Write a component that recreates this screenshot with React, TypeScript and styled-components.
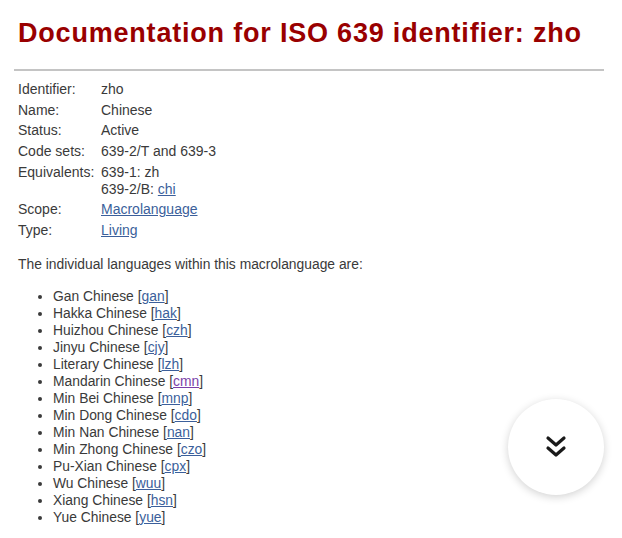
import React from "react";
import styled, { createGlobalStyle } from "styled-components";

const Global = createGlobalStyle`
  html, body { margin: 0; padding: 0; background: #fff; }
  body { font-family: "Liberation Sans", Arial, sans-serif; color: #3a3a3a; }
`;

const Page = styled.div`
  padding: 0 18px;
  position: relative;
  height: 538px;
  overflow: hidden;
`;

const Title = styled.h1`
  margin: 0;
  padding-top: 18px;
  font-size: 27px;
  letter-spacing: 0.8px;
  font-weight: bold;
  color: #990000;
  line-height: 30px;
  white-space: nowrap;
`;

const Rule = styled.hr`
  margin: 21px 0 0 -4px;
  width: 590px;
  border: none;
  border-top: 2px solid #c4c4c4;
`;

const InfoTable = styled.table`
  margin-top: 8px;
  border-collapse: separate;
  border-spacing: 0;
  font-size: 14px;
  td {
    padding: 1.85px 0;
    vertical-align: top;
    line-height: 17px;
  }
  td:first-child {
    width: 83px;
  }
`;

const Link = styled.a<{ $visited?: boolean }>`
  color: ${(p) => (p.$visited ? "#7b3fa8" : "#3b5f9b")};
  text-decoration: underline;
`;

const Intro = styled.p`
  margin: 15px 0 15px 0;
  font-size: 13.85px;
  line-height: 17px;
`;

const List = styled.ul`
  margin: 0;
  padding-left: 35px;
  font-size: 13.85px;
  line-height: 17px;
`;

const Fab = styled.button`
  position: absolute;
  left: 508px;
  top: 399px;
  width: 96px;
  height: 96px;
  border-radius: 50%;
  border: none;
  background: #fff;
  box-shadow: 0 2px 8px rgba(0, 0, 0, 0.18);
  display: flex;
  align-items: center;
  justify-content: center;
  padding: 0;
`;

const langs: [string, string, boolean?][] = [
  ["Gan Chinese", "gan"],
  ["Hakka Chinese", "hak"],
  ["Huizhou Chinese", "czh"],
  ["Jinyu Chinese", "cjy"],
  ["Literary Chinese", "lzh"],
  ["Mandarin Chinese", "cmn", true],
  ["Min Bei Chinese", "mnp"],
  ["Min Dong Chinese", "cdo"],
  ["Min Nan Chinese", "nan"],
  ["Min Zhong Chinese", "czo"],
  ["Pu-Xian Chinese", "cpx"],
  ["Wu Chinese", "wuu"],
  ["Xiang Chinese", "hsn"],
  ["Yue Chinese", "yue"],
];

export default function App() {
  return (
    <>
      <Global />
      <Page>
        <Title>Documentation for ISO 639 identifier: zho</Title>
        <Rule />
        <InfoTable>
          <tbody>
            <tr><td>Identifier:</td><td>zho</td></tr>
            <tr><td>Name:</td><td>Chinese</td></tr>
            <tr><td>Status:</td><td>Active</td></tr>
            <tr><td>Code sets:</td><td>639-2/T and 639-3</td></tr>
            <tr>
              <td>Equivalents:</td>
              <td>639-1: zh<br />639-2/B: <Link href="#">chi</Link></td>
            </tr>
            <tr><td>Scope:</td><td><Link href="#">Macrolanguage</Link></td></tr>
            <tr><td>Type:</td><td><Link href="#">Living</Link></td></tr>
          </tbody>
        </InfoTable>
        <Intro>The individual languages within this macrolanguage are:</Intro>
        <List>
          {langs.map(([name, code, v]) => (
            <li key={code}>
              {name} [<Link href="#" $visited={v}>{code}</Link>]
            </li>
          ))}
        </List>
        <Fab aria-label="scroll down">
          <svg width="22" height="24" viewBox="0 0 22 24" fill="none" stroke="#1a1a1a" strokeWidth="3.2" strokeLinecap="round" strokeLinejoin="round">
            <polyline points="3,3 11,10 19,3" />
            <polyline points="3,13 11,20 19,13" />
          </svg>
        </Fab>
      </Page>
    </>
  );
}
